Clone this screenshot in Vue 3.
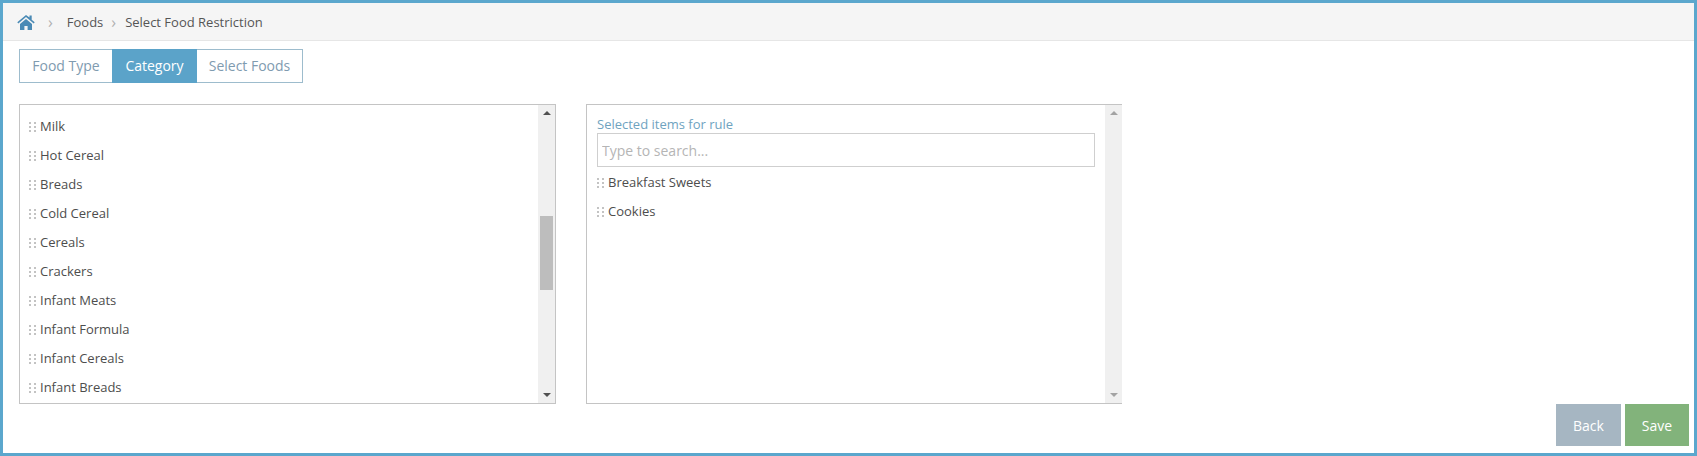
<script setup>
const left = ['Milk','Hot Cereal','Breads','Cold Cereal','Cereals','Crackers','Infant Meats','Infant Formula','Infant Cereals','Infant Breads']
const right = ['Breakfast Sweets','Cookies']
</script>

<template>
  <div class="frame">
    <header class="crumbs">
      <svg class="home" viewBox="0 0 18 16" width="18" height="16"><path fill="#4a8ab5" d="M9 1 0.3 8.2l1 1.2L9 3.1l7.7 6.3 1-1.2-3-2.5V1.6h-2.2v1.8zM3 10v6h4.4v-4h3.2v4H15v-6L9 5z"/></svg>
      <span class="sep first">›</span>
      <span class="crumb">Foods</span>
      <span class="sep">›</span>
      <span class="crumb last">Select Food Restriction</span>
    </header>
    <nav class="tabs">
      <span class="tab t1">Food Type</span>
      <span class="tab active">Category</span>
      <span class="tab t3">Select Foods</span>
    </nav>
    <main class="panels">
      <section class="panel left">
        <div class="list">
          <div v-for="n in left" :key="n" class="item">
            <span class="grip"><i v-for="k in 6" :key="k"></i></span>{{ n }}
          </div>
        </div>
        <div class="bar">
          <span class="up"></span>
          <div class="track"><div class="thumb"></div></div>
          <span class="down"></span>
        </div>
      </section>
      <section class="panel right">
        <div class="list sel">
          <div class="label">Selected items for rule</div>
          <input class="search" placeholder="Type to search..." />
          <div v-for="n in right" :key="n" class="item">
            <span class="grip"><i v-for="k in 6" :key="k"></i></span>{{ n }}
          </div>
        </div>
        <div class="bar dim">
          <span class="up"></span>
          <div class="track"></div>
          <span class="down"></span>
        </div>
      </section>
    </main>
    <footer class="actions">
      <button class="btn back">Back</button>
      <button class="btn save">Save</button>
    </footer>
  </div>
</template>

<style scoped>
.frame {
  width: 1697px; height: 456px; box-sizing: border-box;
  border: 3px solid #5ba7cd; border-right-width: 3px;
  font-family: "Open Sans", sans-serif; font-size: 13px; color: #4a4a4a;
  background: #fff; overflow: hidden;
}
.crumbs {
  height: 38px; box-sizing: border-box; background: #f5f5f5;
  border-bottom: 1px solid #e6e6e6;
  display: flex; align-items: center; padding-left: 14px;
}
.home { flex: none; }
.sep { color: #b0b0b0; font-size: 16px; line-height: 1; margin: 0 9px 0 8px; }
.sep.first { margin: 0 14px 0 13px; }
.crumb { color: #555; }
.tabs { display: flex; height: 34px; margin: 8px 0 0 16px; }
.tab {
  box-sizing: border-box; height: 34px; line-height: 31px; font-size: 14px;
  border: 1px solid #9dbccd; color: #7f9bb0; text-align: center;
}
.t1 { width: 93px; border-right: 0; }
.active { width: 85px; background: #5ba3c9; border-color: #5ba3c9; color: #fff; }
.t3 { width: 106px; border-left: 0; }
.panels { display: flex; gap: 30px; margin: 21px 0 0 16px; }
.panel {
  box-sizing: border-box; height: 300px; border: 1px solid #c4c4c4;
  display: flex; background: #fff;
}
.panel.left { width: 537px; }
.panel.right { width: 536px; border-right: 0; }
.list { flex: 1; padding: 7px 0 0 9px; overflow: hidden; }
.sel { padding: 10px 0 0 10px; }
.item { height: 29px; line-height: 29px; display: flex; align-items: center; white-space: nowrap; color: #4d4d4d; }
.grip {
  display: grid; grid-template-columns: 2px 2px; column-gap: 3px; row-gap: 2px;
  margin-right: 4px; width: 7px; flex: none;
}
.grip i { display: block; width: 2px; height: 2px; background: #c3c3c3; }
.label { color: #6fa3bf; line-height: 18px; height: 18px; }
.search {
  display: block; box-sizing: border-box; width: 498px; height: 34px; border: 1px solid #cfcfcf;
  padding: 0 4px; margin: 0 0 1px; outline: 0; font: inherit; font-size: 14px; color: #555;
}
.search::placeholder { color: #b5b5b5; opacity: 1; }
.sel .item:first-of-type { margin-top: 0; }
.bar { width: 17px; background: #f0f0f0; display: flex; flex-direction: column; align-items: center; flex: none; }
.up, .down { width: 0; height: 0; border-left: 4px solid transparent; border-right: 4px solid transparent; flex: none; }
.up { border-bottom: 4px solid #505050; margin: 6px 0 0; }
.down { border-top: 4px solid #505050; margin: 0 0 6px; }
.track { flex: 1; width: 100%; padding-top: 101px; box-sizing: border-box; }
.thumb { width: 13px; height: 74px; background: #bdbdbd; margin: 0 auto; }
.dim .up { border-bottom-color: #a3a3a3; }
.dim .down { border-top-color: #a3a3a3; }
.actions { display: flex; justify-content: flex-end; gap: 4px; margin-top: 0; padding-right: 5px; }
.btn {
  width: 65px; height: 42px; border: 0; color: #fff; font: inherit; font-size: 14px; padding: 0;
}
.back { background: #a6b6c2; }
.save { background: #82b37b; width: 64px; }
</style>
